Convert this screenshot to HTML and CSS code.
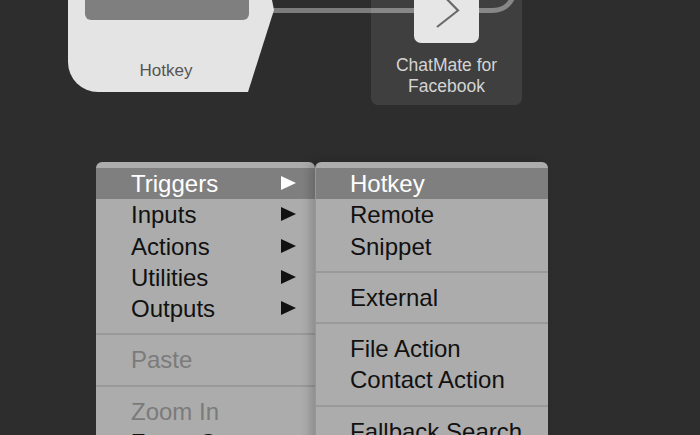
FILE: index.html
```html
<!doctype html>
<html>
  <head>
    <meta charset="utf8">
    <title>Workflow editor</title>
    <link rel="stylesheet" href="styles.css">
  </head>
  <body>
    <div class="canvas">
      <svg class="wires" width="700" height="435" viewBox="0 0 700 435">
        <path d="M 272 10.5 H 416" />
        <path d="M 478 10.5 H 492 C 503 10.5 509 6 513 -3" />
      </svg>

      <div class="node trigger">
        <svg class="shape" width="210" height="102" viewBox="68 -10 210 102">
          <path class="body" d="M 68 -10 H 270 L 274 10 L 248 92 H 98 A 30 30 0 0 1 68 62 Z" />
          <path class="well" d="M 85 -10 H 249 V 14 A 6 6 0 0 1 243 20 H 91 A 6 6 0 0 1 85 14 Z" />
        </svg>
        <div class="label">Hotkey</div>
      </div>

      <div class="node action">
        <div class="btn">
          <svg width="65" height="53" viewBox="0 0 65 53">
            <path d="M 23 -1 L 44 20.5 L 23 37" />
          </svg>
        </div>
        <div class="label">ChatMate for<br>Facebook</div>
      </div>

      <div class="menu main">
        <div class="item hl">Triggers<span class="arrow"></span></div>
        <div class="item">Inputs<span class="arrow"></span></div>
        <div class="item">Actions<span class="arrow"></span></div>
        <div class="item">Utilities<span class="arrow"></span></div>
        <div class="item">Outputs<span class="arrow"></span></div>
        <div class="sep"></div>
        <div class="item off">Paste</div>
        <div class="sep"></div>
        <div class="item off">Zoom In</div>
        <div class="item">Zoom Out</div>
      </div>

      <div class="menu sub">
        <div class="item hl">Hotkey</div>
        <div class="item">Remote</div>
        <div class="item">Snippet</div>
        <div class="sep"></div>
        <div class="item">External</div>
        <div class="sep"></div>
        <div class="item">File Action</div>
        <div class="item">Contact Action</div>
        <div class="sep"></div>
        <div class="item">Fallback Search</div>
      </div>
    </div>
  </body>
</html>
```

FILE: styles.css
```css
html, body { margin: 0; padding: 0; background: #2d2d2d; font-family: "Liberation Sans", Arial, sans-serif; overflow: hidden; }
.canvas { position: relative; width: 700px; height: 435px; overflow: hidden; }

.wires { position: absolute; left: 0; top: 0; }
.wires path { fill: none; stroke: #7c7c7c; stroke-width: 5; }

.node { position: absolute; }
.trigger { left: 68px; top: -10px; width: 210px; height: 102px; }
.trigger .shape { display: block; }
.trigger .body { fill: #e4e4e4; }
.trigger .well { fill: #7f7f7f; }
.trigger .label { position: absolute; left: 0; top: 71px; width: 196px; text-align: center; font-size: 17px; color: #555; }

.action { left: 371px; top: -10px; width: 151px; height: 115px; border-radius: 7px; background: rgba(255,255,255,0.09); }
.action .btn { position: absolute; left: 43px; top: 0; width: 65px; height: 53px; border-radius: 0 0 7px 7px; background: #e6e6e6; }
.action .btn svg { display: block; }
.action .btn path { fill: none; stroke: #6a6a6a; stroke-width: 2.2; }
.action .label { position: absolute; left: 0; right: 0; top: 65px; text-align: center; font-size: 17.5px; line-height: 21px; color: #d4d4d4; }

.menu { position: absolute; top: 162px; height: 300px; padding-top: 6px; background: #acacac; border-radius: 6px 6px 0 0; }
.main { left: 96px; width: 219px; }
.sub { left: 315px; width: 233px; box-shadow: -5px 0 10px rgba(0,0,0,0.18); border-left: 1px solid rgba(0,0,0,0.12); box-sizing: border-box; }

.item { position: relative; height: 31.3px; line-height: 31px; padding-left: 35px; font-size: 24px; color: #111; white-space: nowrap; }
.sub .item { padding-left: 34px; }
.item.hl { background: #7f7f7f; color: #fff; }
.item.off { color: #7b7b7b; }
.arrow { position: absolute; right: 19px; top: 8px; width: 0; height: 0; border-top: 7.5px solid transparent; border-bottom: 7.5px solid transparent; border-left: 15px solid #111; }
.hl .arrow { border-left-color: #fff; }

.sep { height: 20px; display: flex; align-items: center; }
.sep::before { content: ""; flex: 1; height: 2px; background: #999; }
```
